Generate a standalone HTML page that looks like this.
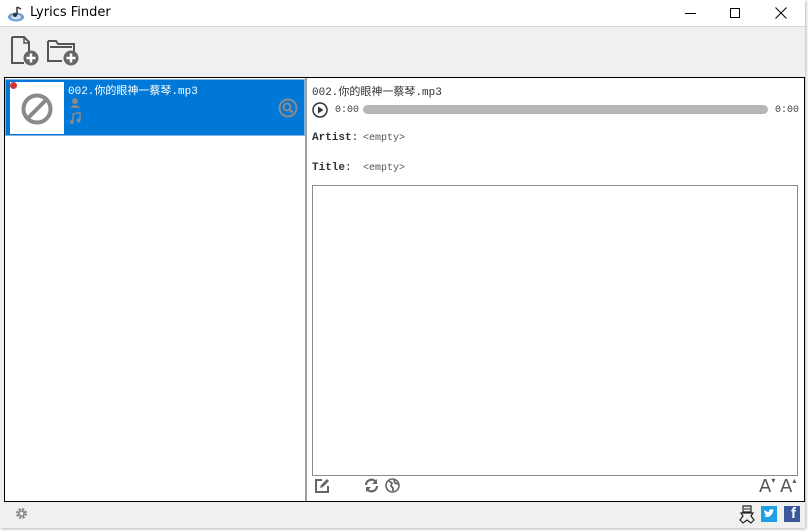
<!DOCTYPE html>
<html><head><meta charset="utf-8"><style>
*{margin:0;padding:0;box-sizing:border-box}
body{width:808px;height:531px;background:#fff;font-family:"Liberation Sans","Noto Sans CJK SC",sans-serif;position:relative;overflow:hidden}
.a{position:absolute}
.mono{font-family:"Liberation Mono","WenQuanYi Zen Hei","Noto Sans CJK SC",monospace}
</style></head><body>
<div class="a" style="left:0;top:0;width:805px;height:528px;background:#f0f0f0;box-shadow:1px 1px 3px rgba(0,0,0,.3)"></div>
<div class="a" style="left:0;top:0;width:805px;height:27px;background:#fff;border-bottom:1px solid #d6d6d6"></div>
<svg class="a" style="left:7px;top:5px" width="18" height="17" viewBox="0 0 18 17"><ellipse cx="9" cy="12" rx="8" ry="4.5" fill="#6aa0d8"/><ellipse cx="9" cy="12" rx="5" ry="2.5" fill="#cfe2f5"/><path d="M10 2v8" stroke="#333" stroke-width="1.5"/><circle cx="8" cy="10" r="2" fill="#333"/><path d="M10 2l4 2" stroke="#333" stroke-width="1.5"/></svg>
<div class="a" style="left:30px;top:5px;color:#000;font-family:'DejaVu Sans',sans-serif;font-size:13px">Lyrics Finder</div>
<div class="a" style="left:685px;top:13px;width:11px;height:1px;background:#000"></div>
<div class="a" style="left:730px;top:8px;width:10px;height:10px;border:1px solid #000"></div>
<svg class="a" style="left:775px;top:7px" width="12" height="12"><path d="M0.5 0.5L11.5 11.5M11.5 0.5L0.5 11.5" stroke="#000"/></svg>
<svg class="a" style="left:10px;top:35px" width="30" height="32" viewBox="0 0 30 32"><path d="M2 2h12l5 5v13M2 2v26h12" fill="none" stroke="#555" stroke-width="2"/><path d="M14 2v6h5" fill="none" stroke="#555" stroke-width="1.5"/><circle cx="21" cy="23" r="7.5" fill="#666"/><path d="M21 18.5v9M16.5 23h9" stroke="#fff" stroke-width="2.5"/></svg>
<svg class="a" style="left:46px;top:35px" width="34" height="32" viewBox="0 0 34 32"><path d="M2 6h8l2 3h16v8M2 6v20h14M4 12h22" fill="none" stroke="#555" stroke-width="2"/><circle cx="25" cy="23" r="7.5" fill="#666"/><path d="M25 18.5v9M20.5 23h9" stroke="#fff" stroke-width="2.5"/></svg>
<div class="a" style="left:4px;top:77px;width:801px;height:425px;background:#fff;border:1px solid #000"></div>
<div class="a" style="left:305px;top:78px;width:2px;height:423px;background:#a0a0a0"></div>
<div class="a" style="left:5px;top:79px;width:300px;height:57px;background:#0078d7;border:1px solid #7fb3e6"></div>
<div class="a" style="left:10px;top:82px;width:54px;height:52px;background:#fff"></div>
<div class="a" style="left:10px;top:82px;width:7px;height:7px;border-radius:50%;background:#d9343a"></div>
<svg class="a" style="left:20px;top:92px" width="34" height="34"><circle cx="17" cy="17" r="13.5" fill="none" stroke="#8a8a8a" stroke-width="4"/><path d="M8 26L26 8" stroke="#8a8a8a" stroke-width="4"/></svg>
<div class="a mono" style="left:68px;top:82px;font-size:11px;color:#fff">002.你的眼神一蔡琴.mp3</div>
<svg class="a" style="left:69px;top:97px" width="12" height="12"><circle cx="6" cy="4" r="3" fill="#8a8a8a"/><path d="M1 11q5-6 10 0z" fill="#8a8a8a"/></svg>
<svg class="a" style="left:69px;top:112px" width="12" height="12"><path d="M4 9V2l7-1.5v7" fill="none" stroke="#8a8a8a" stroke-width="1.5"/><circle cx="3" cy="10" r="2" fill="#8a8a8a"/><circle cx="9.5" cy="8.5" r="2" fill="#8a8a8a"/></svg>
<svg class="a" style="left:278px;top:98px" width="20" height="20"><circle cx="10" cy="10" r="8.5" fill="none" stroke="#8a8a8a" stroke-width="2"/><circle cx="9" cy="9" r="3.5" fill="none" stroke="#8a8a8a" stroke-width="2"/><path d="M11.5 11.5l3 3" stroke="#8a8a8a" stroke-width="2.5"/></svg>
<div class="a mono" style="left:312px;top:83px;font-size:11px;color:#333">002.你的眼神一蔡琴.mp3</div>
<svg class="a" style="left:312px;top:102px" width="16" height="16"><circle cx="8" cy="8" r="7" fill="none" stroke="#333" stroke-width="1.5"/><path d="M6 4.5v7l5.5-3.5z" fill="#333"/></svg>
<div class="a mono" style="left:335px;top:105px;font-size:10px;color:#444">0:00</div>
<div class="a" style="left:363px;top:105px;width:405px;height:9px;border-radius:5px;background:#b6b6b6"></div>
<div class="a mono" style="left:775px;top:105px;font-size:10px;color:#444">0:00</div>
<div class="a mono" style="left:312px;top:132px;font-size:11px;color:#333"><b>Artist</b>:</div>
<div class="a mono" style="left:363px;top:133px;font-size:10px;color:#555">&lt;empty&gt;</div>
<div class="a mono" style="left:312px;top:162px;font-size:11px;color:#333"><b>Title</b>:</div>
<div class="a mono" style="left:363px;top:163px;font-size:10px;color:#555">&lt;empty&gt;</div>
<div class="a" style="left:312px;top:185px;width:486px;height:291px;border:1px solid #8a8a8a"></div>
<svg class="a" style="left:314px;top:478px" width="16" height="16"><path d="M8 2H2v12h12V8" fill="none" stroke="#666" stroke-width="2"/><path d="M6 10l1-3 6-6 2 2-6 6z" fill="#666"/></svg>
<svg class="a" style="left:364px;top:478px" width="15" height="15"><path d="M2 7a5.5 5.5 0 0 1 10-3M13 8a5.5 5.5 0 0 1-10 3" fill="none" stroke="#666" stroke-width="2.2"/><path d="M13 1v5h-5zM2 14V9h5z" fill="#666"/></svg>
<svg class="a" style="left:385px;top:478px" width="15" height="15"><circle cx="7.5" cy="7.5" r="6.5" fill="none" stroke="#666" stroke-width="1.6"/><path d="M4 3l3 2-1 3 2 2v3M9 2l1 3 3 1" fill="none" stroke="#666" stroke-width="1.8"/></svg>
<div class="a" style="left:759px;top:476px;font-size:18px;color:#555;font-family:'DejaVu Sans',sans-serif">A<span style="font-size:8px;vertical-align:top">▾</span></div>
<div class="a" style="left:780px;top:476px;font-size:18px;color:#555;font-family:'DejaVu Sans',sans-serif">A<span style="font-size:8px;vertical-align:top">▴</span></div>
<svg class="a" style="left:15px;top:507px" width="13" height="13"><circle cx="6.5" cy="6.5" r="4" fill="none" stroke="#888" stroke-width="3" stroke-dasharray="2 1.2"/><circle cx="6.5" cy="6.5" r="2.5" fill="none" stroke="#888" stroke-width="1.5"/></svg>
<svg class="a" style="left:738px;top:505px" width="18" height="19"><path d="M5 1h8v6h-8zM3 8h12l-2 3 3 4-3 3-4-3-4 3-3-3 3-4z" fill="none" stroke="#222" stroke-width="1.2"/><path d="M6 4h6" stroke="#222"/></svg>
<div class="a" style="left:761px;top:506px;width:16px;height:16px;background:#1da1e2"></div>
<svg class="a" style="left:763px;top:509px" width="12" height="10"><path d="M1 7c3 2 8 1 9-5l1.5-1-1.5.2 1-1-1.5.5C8 -.5 5.5 1 6 3 4 3 2.5 2 1.5 1c-.5 1.5 0 2.5 1 3H1.5c.2 1 1 2 2 2C2.5 7 1.8 7 1 7z" fill="#fff"/></svg>
<div class="a" style="left:784px;top:506px;width:16px;height:16px;background:#3b5998"></div>
<div class="a" style="left:791px;top:505px;font-size:15px;font-weight:bold;color:#fff">f</div>
</body></html>
